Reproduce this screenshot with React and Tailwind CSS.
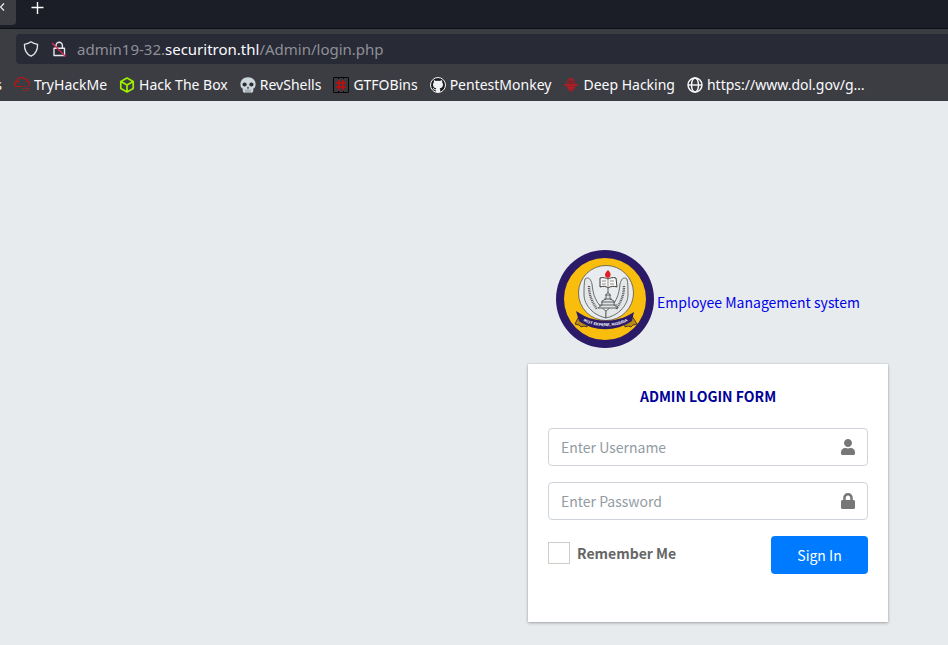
import React from 'react';
import { FaUser, FaLock } from 'react-icons/fa';

function TabStrip() {
  return (
    <div className="flex h-7 items-start overflow-hidden bg-[#1b1e26]">
      <button aria-label="Close tab" className="flex h-[25px] w-4 shrink-0 items-start justify-start rounded-br bg-[#3c3d42]">
        <svg className="mt-px h-3 w-[5px]" viewBox="0 0 5 12" fill="none" stroke="#f4f4f6" strokeWidth="1.2">
          <path d="M4 2.5 0.5 6 4 9.500" />
        </svg>
      </button>
      <button aria-label="New tab" className="ml-[15px] mt-px">
        <svg className="size-[13px]" viewBox="0 0 13 13" fill="none" stroke="#fbfbfe" strokeWidth="1.4">
          <path d="M6.500 1v12M0.500 6.500h12" />
        </svg>
      </button>
    </div>
  );
}

function AddressBar() {
  return (
    <div className="ml-4 mt-[5px] flex h-[30px] items-center rounded-l bg-[#282a36] pl-[7px]">
      <svg className="size-4" viewBox="0 0 16 16" fill="none" stroke="#e6e6ea" strokeWidth="1.300">
        <path d="M8 0.800c2 1.500 4.200 2.200 6.600 2.600 0 5.500-1.600 9.500-6.600 11.800C3 12.900 1.400 8.900 1.400 3.400 3.800 3 6 2.300 8 0.800Z" strokeLinejoin="round" />
      </svg>
      <svg className="ml-3 size-4" viewBox="0 0 16 16" fill="none">
        <path d="M5 7V4.500a3.200 3.200 0 0 1 6.400 0V7M3 7.200h10.500v7.300H3Z" stroke="#e6e6ea" strokeWidth="1.400" strokeLinejoin="round" />
        <path d="M1 2 14.500 15.500" stroke="#e22850" strokeWidth="1.300" />
      </svg>
      <p className="ml-2.5 whitespace-nowrap text-[15px] leading-5 text-[#8f9097]">
        admin19-32.<span className="text-[#fbfbfe]">securitron.thl</span>/Admin/login.php
      </p>
    </div>
  );
}

const CloudIcon = () => (
  <svg className="size-4" viewBox="0 0 16 16" fill="none">
    <path d="M7.500 9.500H3.200C1.500 9.500.5 8.300.5 7s1-2.500 2.500-2.500C3 2 5 .5 7 .5c1.500 0 2.500.5 3 1.300 1.700-.5 3 .5 3 2 1.500.2 2.500 1.300 2.500 2.700 0 1-.5 2-1.500 2.500M3 4.500c1-.2 1.900.2 2.400 1" stroke="#bd1418" strokeWidth="1.200" />
    <path d="M9 9.500h3.500M8 11.500h2M11 11.500h5M9.500 13.500h2.500M13 13.500h2" stroke="#8e2529" strokeWidth="1.200" />
  </svg>
);

const CubeIcon = () => (
  <svg className="size-4" viewBox="0 0 16 16" fill="none" stroke="#9fef00" strokeWidth="1.700" strokeLinejoin="round">
    <path d="M8 1 14.200 4.400v7.200L8 15l-6.200-3.400V4.400ZM1.800 4.400 8 8l6.200-3.600M8 8v7" />
  </svg>
);

const SkullIcon = () => (
  <svg className="size-4" viewBox="0 0 16 16">
    <path d="M8 .3c4.700 0 7.600 2.900 7.600 7 0 2-.6 3.600-2.400 4.500v2.300c0 1.100-.9 1.700-1.800 1.700H4.600c-.9 0-1.800-.6-1.800-1.700v-2.300C1 10.900.4 9.300.4 7.300c0-4.100 2.900-7 7.600-7Z" fill="#ccd6dd" />
    <path d="M6 12.500V16M8 12.500V16M10 12.500V16" stroke="#3c3d42" strokeWidth=".5" />
    <circle cx="4.600" cy="7.500" r="2.100" fill="#292f33" />
    <circle cx="11.400" cy="7.500" r="2.100" fill="#292f33" />
    <path d="M8 9.300 9.200 11.500H6.800Z" fill="#292f33" />
  </svg>
);

const HashIcon = () => (
  <svg className="size-4" viewBox="0 0 16 16" fill="none">
    <path d="M.5.500h15v15H.5Z" fill="#3a3a3e" stroke="#08080a" />
    <path d="M5.500 0v2M10.500 0v2M5.500 14v2M10.500 14v2" stroke="#08080a" />
    <path d="M6 3v10M10 3v10M3 6h10M3 10h10" stroke="#c40d0d" strokeWidth="1.600" />
  </svg>
);

const OctocatIcon = () => (
  <svg className="size-4" viewBox="0 0 16 16">
    <circle cx="8" cy="8" r="7.500" fill="#1d1e22" stroke="#f2f2f4" strokeWidth="1" />
    <path d="M4 3.200c.9 0 1.500.5 2 .9a8 8 0 0 1 4 0c.5-.4 1.100-.9 2-.9.300.8.300 1.500.1 2 .7.800.9 1.700.9 2.500 0 2.500-1.500 3.300-3.300 3.500.4.400.5.900.5 1.600v2.300H5.800v-2c-1.300.2-2-.2-2.400-1-.2-.5-.6-.8-.9-1 1-.2 1.400.4 1.800.9.400.5.900.5 1.500.3.100-.4.200-.8.500-1.100C4.500 11 3 10.200 3 7.700c0-.8.200-1.700.9-2.500-.2-.5-.2-1.200.1-2Z" fill="#f2f2f4" />
  </svg>
);

const HoodIcon = () => (
  <svg className="size-4" viewBox="0 0 16 16">
    <path d="M4 6C4 3 5.700.8 8 .8S12 3 12 6l.3.800 3.200.2-2.200 2-.8.500-1 2.800L8 15.300l-3.500-3-1-2.800-.8-.5L.5 7l3.200-.2Z" fill="#95222a" />
    <path d="M5 4.500h6M4.500 6.300h7" stroke="#5a2a30" strokeWidth=".7" />
    <path d="M1.500 7.900h13M5 10.800h6" stroke="#b81d24" strokeWidth="1.200" />
  </svg>
);

const GlobeIcon = () => (
  <svg className="size-4" viewBox="0 0 16 16" fill="none" stroke="#fbfbfe" strokeWidth="1.400">
    <circle cx="8" cy="8" r="7" />
    <ellipse cx="8" cy="8" rx="3.500" ry="7" />
    <path d="M1 8h14" />
  </svg>
);

const bookmarks = [
  { label: 'TryHackMe', Icon: CloudIcon },
  { label: 'Hack The Box', Icon: CubeIcon },
  { label: 'RevShells', Icon: SkullIcon },
  { label: 'GTFOBins', Icon: HashIcon },
  { label: 'PentestMonkey', Icon: OctocatIcon },
  { label: 'Deep Hacking', Icon: HoodIcon },
  { label: 'https://www.dol.gov/g…', Icon: GlobeIcon },
];

function BookmarksBar() {
  return (
    <nav className="flex h-[37px] items-center gap-3 overflow-hidden pt-1 text-[14px] leading-5 text-[#fbfbfe]">
      <span className="flex w-0.5 shrink-0 justify-end">s</span>
      {bookmarks.map(({ label, Icon }) => (
        <a key={label} href="#" className="flex shrink-0 items-center gap-1 whitespace-nowrap">
          <Icon />
          {label}
        </a>
      ))}
    </nav>
  );
}

function Crest() {
  return (
    <svg className="size-[98px] shrink-0" viewBox="0 0 98 98" fill="none" role="img" aria-label="Institution crest">
      <circle cx="49" cy="49" r="49" fill="#2b1a68" />
      <circle cx="49" cy="49" r="41" fill="#f9bd0d" />
      <circle cx="50" cy="43" r="27.500" fill="#e8ecee" stroke="#58533f" strokeWidth=".8" />
      <path d="M29 29c4-3 6 1 7 5 1 11 4 20 14 27v7c-5-1-11-4-14-7-6-6-8-11-8-17 0-5 0-11 1-15Z" fill="#e4e7e7" stroke="#4b4d50" strokeWidth=".8" />
      <path d="M71 29c-4-3-6 1-7 5-1 11-4 20-14 27v7c5-1 11-4 14-7 6-6 8-11 8-17 0-5 0-11-1-15Z" fill="#e4e7e7" stroke="#4b4d50" strokeWidth=".8" />
      <path d="M33 36c0 9 3 16 8 23M68 36c0 9-3 16-8 23" stroke="#54565a" strokeWidth="2.400" strokeDasharray="1 .8" />
      <path d="M52 37v5l2 3v4l4 2v4l4 3H42l4-3v-4l4-2v-4l2-3" fill="#dfe2e2" stroke="#55585a" strokeWidth=".9" />
      <path d="M49 45h6M48 49h8M45 52h14M43 55h18" stroke="#55585a" strokeWidth=".9" />
      <path d="M44 28c3-1 6 0 8 1 2-1 5-2 8-1l1 9c-3-1-6-1-9 1-2-2-5-2-8-1Z" fill="#f7f7f3" stroke="#3d3d40" strokeWidth="1" />
      <path d="M52 29v9M46 31h4M46 34h4M54 31h4M54 34h4" stroke="#77787a" strokeWidth=".8" />
      <path d="M52 20c3.500 3 3.500 7 0 8-4.500-1-3.500-5 0-8Z" fill="#df2028" />
      <path d="M23 66l8 3 0 8-3-1-3 1-2-2-4-1ZM76 66l-8 3 1 8 3-1 3 1 2-2 4-1Z" fill="#b98b15" stroke="#4d3b24" strokeWidth="1" />
      <path d="M20 61c6 4 12 7 17 8 9 2 18 2 25 0 6-1 11-4 16-7l-2 9C60 82 38 82 23 71Z" fill="#2b1a68" />
      <path id="ribbon" d="M22 68C38 79 61 79 77 68" />
      <text fill="#fff" textAnchor="middle" className="font-['Liberation_Sans',sans-serif] text-[4px] font-bold">
        <textPath href="#ribbon" startOffset="50%">IKOT EKPENE, NIGERIA</textPath>
      </text>
    </svg>
  );
}

function Field({ id, type, placeholder, Icon }) {
  return (
    <div className="mb-4 flex h-[38px] items-center rounded border border-[#ced4da] pr-[11px]">
      <input
        id={id}
        type={type}
        aria-label={placeholder}
        placeholder={placeholder}
        className="h-full min-w-0 flex-1 bg-transparent px-3 text-[#495057] outline-none placeholder:text-[#939ba2]"
      />
      <Icon className="size-4 text-[#777]" />
    </div>
  );
}

function LoginCard() {
  return (
    <form className="bg-white px-5 pb-12 pt-5 shadow-[0_0_1px_rgba(0,0,0,0.13),0_1px_3px_rgba(0,0,0,0.3)]">
      <h1 className="mb-5 text-center font-bold leading-6 text-[#000099]">ADMIN LOGIN FORM</h1>
      <Field id="username" type="text" placeholder="Enter Username" Icon={FaUser} />
      <Field id="password" type="password" placeholder="Enter Password" Icon={FaLock} />
      <div className="flex items-start justify-between">
        <label className="flex items-center gap-[7px] pt-[5px] font-bold leading-6 text-[#666]">
          <input type="checkbox" className="size-[22px] appearance-none border border-[#cfcdc5] bg-white" />
          Remember Me
        </label>
        <button type="submit" className="h-[38px] w-[97px] rounded bg-[#007bff] text-white">Sign In</button>
      </div>
    </form>
  );
}

export default function App() {
  return (
    <div className="flex min-h-screen flex-col bg-[#e8ebee]">
      <header className="bg-[#3c3d42] font-['Noto_Sans',sans-serif]">
        <TabStrip />
        <div className="border-t border-[#101116]">
          <AddressBar />
          <BookmarksBar />
        </div>
      </header>
      <main className="flex flex-1 justify-end pr-[60px] pt-[149px] font-['Noto_Sans_CJK_SC',sans-serif] text-[14px]">
        <div className="w-[360px]">
          <div className="mb-4 flex items-center justify-center gap-[3px]">
            <Crest />
            <a href="#" className="pt-1.5 leading-6 text-[#0000e8]">Employee Management system</a>
          </div>
          <LoginCard />
        </div>
      </main>
    </div>
  );
}
